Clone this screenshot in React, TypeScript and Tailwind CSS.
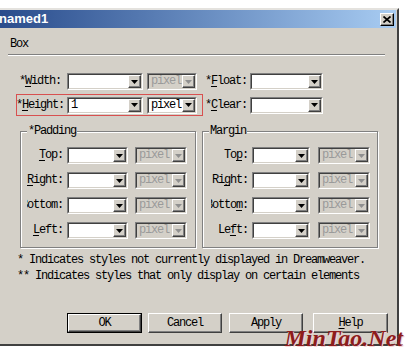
import React from "react";

// small win2k style combo pieces
const Arrow = ({ off }: { off?: boolean }) => (
  <div className="w-[13px] h-full flex items-center justify-center bg-[#d4d0c8] border border-t-white border-l-white border-r-[#404040] border-b-[#404040] shadow-[inset_-1px_-1px_0_#808080]">
    <svg width="7" height="4" viewBox="0 0 7 4">
      <path d="M0 0h7L3.5 4z" fill={off ? "#909090" : "#000"} />
    </svg>
  </div>
);

function Combo({ w, value = "", off }: { w: string; value?: string; off?: boolean }) {
  return (
    <div className={`${w} h-[17px] shrink-0 border border-t-[#808080] border-l-[#808080] border-r-white border-b-white`}>
      <div
        className={`h-full flex border border-t-[#404040] border-l-[#404040] border-r-[#d4d0c8] border-b-[#d4d0c8] ${
          off ? "bg-[#d4d0c8] text-[#9a9a9a]" : "bg-white text-black"
        }`}
      >
        <span className="flex-1 pl-[2px] leading-[13px] overflow-hidden whitespace-nowrap">{value}</span>
        <Arrow off={off} />
      </div>
    </div>
  );
}

function Label({ cls, children }: { cls: string; children: React.ReactNode }) {
  return (
    <div className={`flex justify-end overflow-hidden whitespace-nowrap shrink-0 leading-[13px] ${cls}`}>
      <span>{children}</span>
    </div>
  );
}

function Btn({ cls, def, children }: { cls: string; def?: boolean; children: React.ReactNode }) {
  return (
    <div className={`${cls} h-[20px] ${def ? "border border-black" : ""}`}>
      <div className="h-full flex items-center justify-center border border-t-white border-l-white border-r-[#404040] border-b-[#404040] shadow-[inset_-1px_-1px_0_#808080]">
        {children}
      </div>
    </div>
  );
}

const U = ({ children }: { children: React.ReactNode }) => <u className="underline underline-offset-2">{children}</u>;

function Group({ title, cls, children }: { title: string; cls: string; children: React.ReactNode }) {
  return (
    <div className={`${cls} w-[176px] h-[117px] border border-[#808080] shadow-[inset_1px_1px_0_#fff,1px_1px_0_#fff]`}>
      <div className="-mt-[7px] ml-[6px] w-fit px-[1px] bg-[#d4d0c8] leading-[13px]">{title}</div>
      <div className="mt-[9px] flex flex-col gap-[8px]">{children}</div>
    </div>
  );
}

export default function App() {
  const pad = [
    { l: <><U>T</U>op:</> },
    { l: <><U>R</U>ight:</> },
    { l: <>Bottom:</> },
    { l: <><U>L</U>eft:</> },
  ];
  const mar = [
    { l: <>To<U>p</U>:</> },
    { l: <>Ri<U>g</U>ht:</> },
    { l: <>Botto<U>m</U>:</> },
    { l: <>Le<U>f</U>t:</> },
  ];

  return (
    <div className="w-[408px] h-[355px] bg-white overflow-hidden relative font-['Liberation_Mono',monospace] text-[12px] tracking-[-1.2px] text-black">
      <div className="mt-[8px] w-[399px] h-[338px] bg-[#d4d0c8] border-t-2 border-t-[#e4e2de] border-r-2 border-r-[#404040] border-b-2 border-b-[#404040] pr-[1px]">
        {/* title bar */}
        <div className="h-[18px] flex items-center justify-between bg-linear-to-r from-[#2a4c8c] to-[#a8ccf2] pr-[2px]">
          <span className="-ml-[1px] font-['Liberation_Sans',sans-serif] font-bold text-[13px] tracking-normal text-white">named1</span>
          <div className="w-[14px] h-[13px] bg-[#d4d0c8] border border-t-white border-l-white border-r-black border-b-black shadow-[inset_-1px_-1px_0_#808080] flex items-center justify-center">
            <svg width="8" height="7" viewBox="0 0 8 7">
              <path d="M0.5 0.5L7.5 6.5M7.5 0.5L0.5 6.5" stroke="#000" strokeWidth="1.7" />
            </svg>
          </div>
        </div>

        <div className="pt-[10px] pl-[10px] leading-[13px]">Box</div>
        <div className="mt-[3px] ml-[8px] w-[377px] h-[2px] border-t border-t-[#808080] border-b border-b-white" />

        {/* width / float */}
        <div className="mt-[17px] flex items-center h-[17px]">
          <Label cls="ml-[10px] w-[51px]">*<U>W</U>idth:</Label>
          <Combo w="ml-[6px] w-[76px]" />
          <Combo w="ml-[4px] w-[50px]" value="pixel" off />
          <Label cls="w-[50px]">*<U>F</U>loat:</Label>
          <Combo w="ml-[3px] w-[73px]" />
        </div>

        {/* height / clear */}
        <div className="mt-[4px] flex items-center">
          <div className="ml-[16px] w-[187px] h-[22px] flex items-center border border-[#d85050]">
            <div className="w-[47px] shrink-0 flex justify-end whitespace-nowrap leading-[13px]">
              <span>*<U>H</U>eight:</span>
            </div>
            <Combo w="ml-[3px] w-[76px]" value="1" />
            <Combo w="ml-[4px] w-[50px]" value="pixel" />
          </div>
          <Label cls="w-[44px]">*<U>C</U>lear:</Label>
          <Combo w="ml-[3px] w-[73px]" />
        </div>

        {/* padding / margin */}
        <div className="mt-[15px] flex">
          <Group title="*Padding" cls="ml-[20px]">
            {pad.map((r, i) => (
              <div key={i} className="flex items-center h-[17px]">
                <Label cls="ml-[6px] w-[36px]">{r.l}</Label>
                <Combo w="ml-[4px] w-[61px]" />
                <Combo w="ml-[7px] w-[52px]" value="pixel" off />
              </div>
            ))}
          </Group>
          <Group title="Margin" cls="ml-[6px]">
            {mar.map((r, i) => (
              <div key={i} className="flex items-center h-[17px]">
                <Label cls="ml-[8px] w-[37px]">{r.l}</Label>
                <Combo w="ml-[4px] w-[58px]" />
                <Combo w="ml-[8px] w-[52px]" value="pixel" off />
              </div>
            ))}
          </Group>
        </div>

        <div className="mt-[4px] pl-[17px] leading-[16px]">
          <div>* Indicates styles not currently displayed in Dreamweaver.</div>
          <div>** Indicates styles that only display on certain elements</div>
        </div>

        <div className="mt-[29px] flex">
          <Btn cls="ml-[67px] w-[75px]" def>OK</Btn>
          <Btn cls="ml-[6px] w-[74px]">Cancel</Btn>
          <Btn cls="ml-[7px] w-[74px]">Apply</Btn>
          <Btn cls="ml-[10px] w-[75px]">
            <span><U>H</U>elp</span>
          </Btn>
        </div>
      </div>

      {/* site watermark */}
      <div className="absolute right-[5px] bottom-[4px] font-['Liberation_Serif',serif] italic font-bold text-[24px] leading-[26px] tracking-normal text-[#8e1c1c] [text-shadow:1px_1px_0_#f4d6d6]">
        MinTao.Net
      </div>
    </div>
  );
}
